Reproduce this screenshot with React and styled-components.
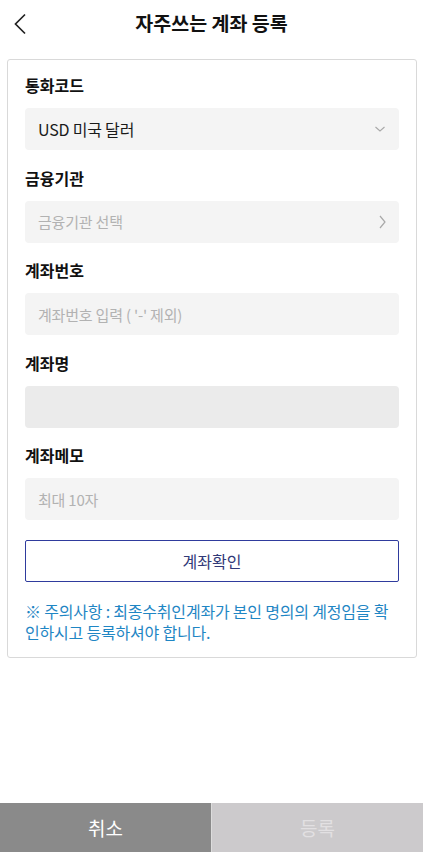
import React from 'react';
import styled, { createGlobalStyle } from 'styled-components';

const GlobalStyle = createGlobalStyle`
  html, body {
    margin: 0;
    padding: 0;
    background: #fff;
  }
  body {
    font-family: "Noto Sans CJK KR", "Noto Sans", sans-serif;
    color: #111;
  }
  * { box-sizing: border-box; }
`;

const Page = styled.div`
  width: 423px;
  height: 852px;
  display: flex;
  flex-direction: column;
  background: #fff;
`;

const Header = styled.header`
  height: 45px;
  display: flex;
  align-items: center;
  justify-content: center;
  position: relative;
`;

const BackButton = styled.button`
  position: absolute;
  left: 8px;
  top: 10px;
  width: 24px;
  height: 28px;
  padding: 0;
  border: none;
  background: none;
  display: flex;
  align-items: center;
  justify-content: center;
  color: #222;
`;

const Title = styled.h1`
  margin: 0;
  font-size: 19.5px;
  font-weight: 700;
  color: #111;
`;

const Content = styled.main`
  flex: 1;
  padding: 14px 6px 0 7px;
`;

const Card = styled.section`
  border: 1px solid #d9d9d9;
  border-radius: 3px;
  padding: 14px 17px 14px 17px;
  display: flex;
  flex-direction: column;
`;

const Field = styled.div`
  display: flex;
  flex-direction: column;
  margin-bottom: 16.5px;
`;

const Label = styled.label`
  font-size: 16px;
  font-weight: 700;
  line-height: 22px;
  margin-bottom: 12px;
  color: #111;
`;

const Box = styled.div`
  height: 42px;
  border-radius: 4px;
  background: ${p => (p.$disabled ? '#ebebeb' : '#f4f4f4')};
  display: flex;
  align-items: center;
  justify-content: space-between;
  padding: 0 13px 0 13px;
  font-size: ${p => (p.$placeholder ? '15px' : '16px')};
  color: ${p => (p.$placeholder ? '#b2b2b2' : '#1a1a1a')};
  letter-spacing: -0.2px;
`;

const CheckButton = styled.button`
  height: 42px;
  margin-top: 3px;
  border: 1.5px solid #2f3b9d;
  border-radius: 2px;
  background: #fff;
  font-family: inherit;
  font-size: 16px;
  color: #323a78;
`;

const Notice = styled.p`
  margin: 19px 0 0 0;
  font-size: 16px;
  line-height: 21px;
  color: #1f86c4;
  letter-spacing: -0.2px;
`;

const Footer = styled.footer`
  height: 49px;
  display: flex;
`;

const FooterButton = styled.button`
  flex: 1;
  border: none;
  font-family: inherit;
  font-size: 19px;
  background: ${p => (p.$primary ? '#cccacc' : '#8a8a8a')};
  color: ${p => (p.$primary ? '#e2e0e2' : '#fff')};
  border-left: ${p => (p.$primary ? '1px solid #dcdcdc' : 'none')};
`;

const ChevronDown = () => (
  <svg width="12" height="8" viewBox="0 0 12 8" fill="none">
    <path d="M1.5 2l4.5 4 4.5-4" stroke="#a8a8a8" strokeWidth="1.1" />
  </svg>
);

const ChevronRight = () => (
  <svg width="8" height="16" viewBox="0 0 8 16" fill="none">
    <path d="M2 2l5 6-5 6" stroke="#a8a8a8" strokeWidth="1.2" />
  </svg>
);

const BackIcon = () => (
  <svg width="14" height="22" viewBox="0 0 14 22" fill="none">
    <path d="M12 1.5L2.5 11l9.5 9.5" stroke="#222" strokeWidth="1.7" />
  </svg>
);

export default function App() {
  return (
    <>
      <GlobalStyle />
      <Page>
        <Header>
          <BackButton aria-label="뒤로">
            <BackIcon />
          </BackButton>
          <Title>자주쓰는 계좌 등록</Title>
        </Header>
        <Content>
          <Card>
            <Field>
              <Label>통화코드</Label>
              <Box>
                USD 미국 달러
                <ChevronDown />
              </Box>
            </Field>
            <Field>
              <Label>금융기관</Label>
              <Box $placeholder>
                금융기관 선택
                <ChevronRight />
              </Box>
            </Field>
            <Field>
              <Label>계좌번호</Label>
              <Box $placeholder>계좌번호 입력 ( '-' 제외)</Box>
            </Field>
            <Field>
              <Label>계좌명</Label>
              <Box $disabled />
            </Field>
            <Field>
              <Label>계좌메모</Label>
              <Box $placeholder>최대 10자</Box>
            </Field>
            <CheckButton>계좌확인</CheckButton>
            <Notice>
              ※ 주의사항 : 최종수취인계좌가 본인 명의의 계정임을 확인하시고 등록하셔야 합니다.
            </Notice>
          </Card>
        </Content>
        <Footer>
          <FooterButton>취소</FooterButton>
          <FooterButton $primary>등록</FooterButton>
        </Footer>
      </Page>
    </>
  );
}
